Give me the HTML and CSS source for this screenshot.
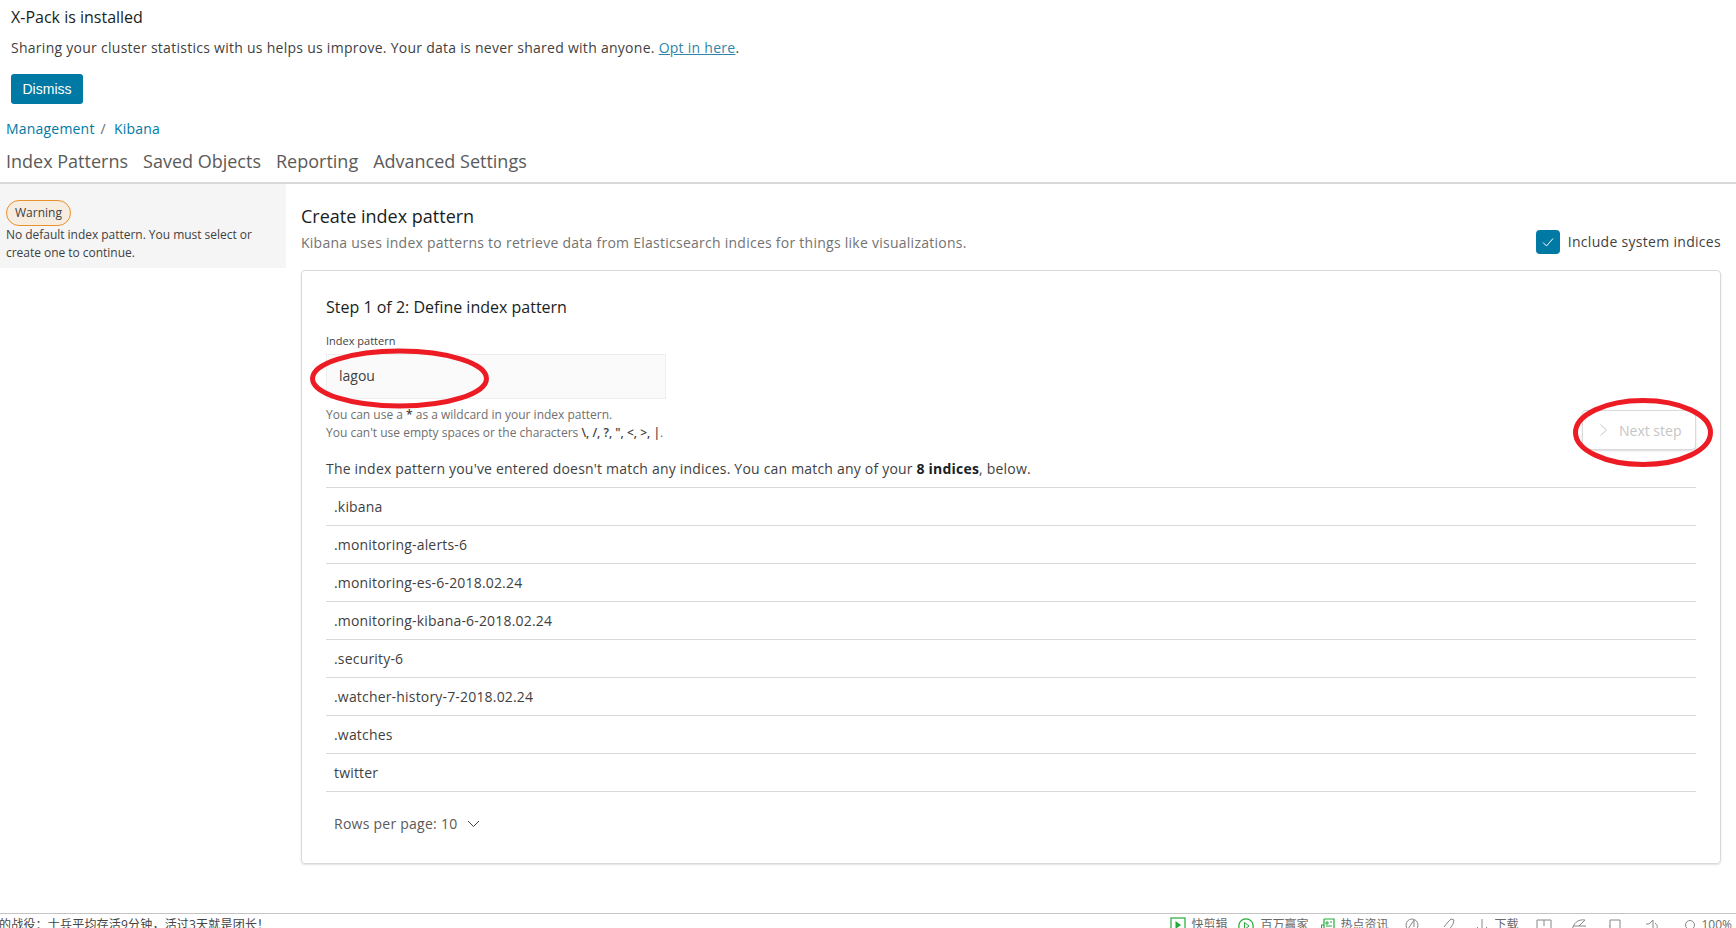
FILE: index.html
```html
<!DOCTYPE html>
<html lang="en">
<head>
<meta charset="utf-8">
<title>Kibana - Create index pattern</title>
<link rel="stylesheet" href="styles.css">
</head>
<body>
<div class="page">
  <main class="main">
    <section class="notice">
      <h2 class="notice-title">X-Pack is installed</h2>
      <p class="notice-text">Sharing your cluster statistics with us helps us improve. Your data is never shared with anyone. <a class="notice-link" href="#">Opt in here</a>.</p>
      <button class="dismiss">Dismiss</button>
    </section>
    <nav class="crumbs"><a href="#">Management</a><span class="crumb-sep">/</span><a href="#">Kibana</a></nav>
    <nav class="tabs"><span>Index Patterns</span><span>Saved Objects</span><span>Reporting</span><span>Advanced Settings</span></nav>
    <div class="content">
      <aside class="sidebar">
        <span class="badge">Warning</span>
        <p class="side-text">No default index pattern. You must select or create one to continue.</p>
      </aside>
      <div class="body">
        <header class="head">
          <div>
            <h1 class="head-title">Create index pattern</h1>
            <p class="head-sub">Kibana uses index patterns to retrieve data from Elasticsearch indices for things like visualizations.</p>
          </div>
          <div class="sys">
            <span class="check"><svg width="14" height="12" viewBox="0 0 14 12"><path d="M2 6.5 L5.5 10 L12 2.5" fill="none" stroke="#fff" stroke-width="1"/></svg></span>
            <span>Include system indices</span>
          </div>
        </header>
        <section class="panel">
          <h2 class="step">Step 1 of 2: Define index pattern</h2>
          <div class="form-row">
            <div>
              <label class="field-label">Index pattern</label>
              <div class="input">lagou</div>
              <p class="help">You can use a <b>*</b> as a wildcard in your index pattern.<br>You can't use empty spaces or the characters <b>\, /, ?, ", &lt;, &gt;, |</b>.</p>
            </div>
            <button class="next"><svg width="9" height="14" viewBox="0 0 9 14"><path d="M1.5 1.5 L7.5 7 L1.5 12.5" fill="none" stroke="#c6c6c6" stroke-width="1"/></svg><span>Next step</span></button>
          </div>
          <p class="match">The index pattern you've entered doesn't match any indices. You can match any of your <b>8 indices</b>, below.</p>
          <ul class="list">
            <li>.kibana</li>
            <li>.monitoring-alerts-6</li>
            <li>.monitoring-es-6-2018.02.24</li>
            <li>.monitoring-kibana-6-2018.02.24</li>
            <li>.security-6</li>
            <li>.watcher-history-7-2018.02.24</li>
            <li>.watches</li>
            <li>twitter</li>
          </ul>
          <div class="rows">Rows per page: 10<svg width="13" height="8" viewBox="0 0 13 8"><path d="M1 1 L6.5 6.5 L12 1" fill="none" stroke="#3f3f3f" stroke-width="1"/></svg></div>
        </section>
      </div>
    </div>
  </main>
  <footer class="status">
    <span class="news">的战役：士兵平均存活9分钟，活过3天就是团长！</span>
    <div class="tray">
      <span class="tray-item"><svg width="16" height="16" viewBox="0 0 16 16"><rect x="1" y="1" width="14" height="17" fill="none" stroke="#22ac38" stroke-width="1.2"/><path d="M5.5 4 L11 8 L5.5 12Z" fill="#22ac38"/></svg>快剪辑</span>
      <span class="tray-item"><svg width="16" height="16" viewBox="0 0 16 16"><circle cx="8" cy="9" r="7.2" fill="none" stroke="#22ac38" stroke-width="1.2"/><path d="M6.5 5.5 L11 9 L6.5 12.5Z" fill="none" stroke="#22ac38"/></svg>百万赢家</span>
      <span class="tray-item"><svg width="14" height="16" viewBox="0 0 14 16"><path d="M3 2 H13 V16 M3 2 V16 M3 8 H0.5 V16" fill="none" stroke="#22ac38" stroke-width="1.2"/><path d="M5 5h2v2H5zM9 5h2M5 9h6" fill="none" stroke="#22ac38"/></svg>热点资讯</span>
      <span class="tray-item"><svg width="14" height="16" viewBox="0 0 14 16"><circle cx="7" cy="8" r="6" fill="none" stroke="#888"/><path d="M3 12 L9 3 V10" fill="none" stroke="#888"/></svg></span>
      <span class="tray-item"><svg width="12" height="16" viewBox="0 0 12 16"><path d="M1 10 L5 5 L8 2 L11 3 L10 7 L6 13" fill="none" stroke="#888"/></svg></span>
      <span class="tray-item"><svg width="14" height="16" viewBox="0 0 14 16"><path d="M7 2 V15 M2 10 L7 15 L12 10" fill="none" stroke="#888"/></svg>下载</span>
      <span class="tray-item"><svg width="16" height="16" viewBox="0 0 16 16"><path d="M1 16 V3 H15 V16 M8 3 V9" fill="none" stroke="#888"/></svg></span>
      <span class="tray-item"><svg width="16" height="16" viewBox="0 0 16 16"><path d="M1 14 C2 6 7 2 14 3 M2 9 H15 M14 3 L8 9" fill="none" stroke="#888"/></svg></span>
      <span class="tray-item"><svg width="12" height="16" viewBox="0 0 12 16"><path d="M1 16 V3 H11 V16 M1 9 H0" fill="none" stroke="#888"/></svg></span>
      <span class="tray-item"><svg width="14" height="16" viewBox="0 0 14 16"><path d="M1 7 H4 L8 3 V16 M10 6 C13 8 13 11 10 13" fill="none" stroke="#888"/></svg></span>
      <span class="tray-item"><svg width="12" height="16" viewBox="0 0 12 16"><circle cx="6" cy="8" r="4.5" fill="none" stroke="#888"/></svg>100%</span>
    </div>
  </footer>
  <svg class="marks" width="1736" height="928" viewBox="0 0 1736 928">
    <ellipse cx="399.5" cy="378.5" rx="87" ry="27.5" fill="none" stroke="#ed1c24" stroke-width="5"/>
    <ellipse cx="1643" cy="432.5" rx="67.5" ry="32" fill="none" stroke="#ed1c24" stroke-width="5"/>
  </svg>
</div>
</body>
</html>
```

FILE: styles.css
```css
* { box-sizing: border-box; }
html, body { margin: 0; padding: 0; }
body { font-family: "Open Sans", "Noto Sans CJK SC", sans-serif; color: #3f3f3f; background: #fff; overflow: hidden; }
h1, h2, p, ul { margin: 0; padding: 0; font-weight: 400; }
a { color: #0079a5; text-decoration: none; }

.page { position: relative; width: 1736px; height: 928px; display: flex; flex-direction: column; overflow: hidden; }
.main { flex: 1; min-height: 0; }

.notice { padding: 5px 11px 0; height: 112px; }
.notice-title { font-size: 16px; line-height: 24px; color: #191e23; }
.notice-text { font-size: 14px; letter-spacing: .27px; line-height: 20px; margin-top: 9px; color: #3f3f3f; }
.notice-link { color: #3185a8; text-decoration: underline; }
.dismiss { display: block; margin-top: 16px; width: 72px; height: 30px; padding: 0; border: 0; border-radius: 3px; background: #0079a5; color: #fff; font: 14px "Liberation Sans", sans-serif; }

.crumbs { font-size: 14px; letter-spacing: .2px; line-height: 20px; padding-left: 6px; margin-top: 7px; height: 20px; display: flex; color: #6b6b6b; }
.crumb-sep { margin: 0 8px 0 6px; }

.tabs { display: flex; gap: 15px; height: 43px; padding: 10px 0 0 6px; font-size: 18px; line-height: 24px; color: #5a5a5a; }

.content { display: flex; border-top: 2px solid #d9d9d9; }
.sidebar { width: 286px; height: 84px; padding: 16px 6px 0; background: #f5f5f5; flex: none; }
.badge { display: block; width: 65px; height: 26px; border: 1px solid #e8912d; border-radius: 13px; background: #f7ece0; font-size: 12px; line-height: 23px; text-align: center; color: #3f3f3f; }
.side-text { font-size: 12px; letter-spacing: -.03px; line-height: 18px; margin-top: 0; width: 262px; color: #3f3f3f; }

.body { flex: 1; padding: 20px 15px 0 15px; min-width: 0; }
.head { display: flex; justify-content: space-between; align-items: flex-start; height: 66px; }
.head-title { font-size: 18px; line-height: 24px; color: #191e23; }
.head-sub { font-size: 14px; letter-spacing: .256px; line-height: 20px; margin-top: 5px; color: #737373; }
.sys { align-self: flex-end; display: flex; align-items: center; gap: 8px; font-size: 14px; letter-spacing: .3px; line-height: 24px; color: #3f3f3f; padding-bottom: 16px; }
.check { width: 24px; height: 24px; border-radius: 4px; background: #0079a5; display: flex; align-items: center; justify-content: center; }

.panel { height: 594px; border: 1px solid #d9d9d9; border-radius: 4px; box-shadow: 0 1px 2px rgba(0,0,0,.12); padding: 24px 24px 0; }
.step { font-size: 16px; line-height: 24px; color: #191e23; }
.form-row { display: flex; justify-content: space-between; align-items: flex-end; margin-top: 15px; }
.field-label { display: block; font-size: 11px; line-height: 14px; color: #3f3f3f; }
.input { width: 340px; height: 45px; margin-top: 6px; padding-left: 12px; background: #fafafa; border: 1px solid #eee; font-size: 14px; line-height: 41px; color: #3f3f3f; }
.help { font-size: 12px; line-height: 18px; margin-top: 7px; color: #6f6f6f; }
.help b { font-weight: 600; color: #3f3f3f; }
.next { width: 114px; height: 40px; display: flex; align-items: center; gap: 11px; padding: 0 0 0 16px; background: #fff; border: 1px solid #d9d9d9; border-radius: 4px; box-shadow: 0 1px 2px rgba(0,0,0,.15); font: 14px "Open Sans", sans-serif; color: #c6c6c6; margin-bottom: -8px; }

.match { font-size: 14px; letter-spacing: .2px; line-height: 20px; margin-top: 17px; color: #3f3f3f; }
.match b { font-weight: 700; color: #191e23; }
.list { list-style: none; margin-top: 8px; border-top: 1px solid #d9d9d9; }
.list li { height: 38px; border-bottom: 1px solid #d9d9d9; padding-left: 8px; font-size: 14px; letter-spacing: .18px; line-height: 38px; color: #3f3f3f; }
.rows { display: flex; align-items: center; gap: 10px; margin-top: 22px; padding-left: 8px; font-size: 14px; letter-spacing: .25px; line-height: 20px; color: #5a5a5a; }

.status { flex: none; height: 15px; border-top: 1px solid #c4c4c4; display: flex; justify-content: space-between; font-size: 12px; line-height: 22px; color: #444; overflow: hidden; background: #fff; white-space: nowrap; }
.news { display: block; margin-left: -1px; letter-spacing: .2px; }
.tray { display: flex; align-items: flex-start; padding-right: 4px; }
.tray-item { display: flex; align-items: flex-start; gap: 5px; color: #6a6a6a; }
.tray-item svg { display: block; margin-top: 3px; }
.tray-item:nth-child(1) { margin-right: 11px; }
.tray-item:nth-child(2) { margin-right: 13px; gap: 6px; }
.tray-item:nth-child(3) { margin-right: 17px; }
.tray-item:nth-child(4) { margin-right: 24px; }
.tray-item:nth-child(5) { margin-right: 20px; }
.tray-item:nth-child(6) { margin-right: 18px; }
.tray-item:nth-child(7) { margin-right: 19px; }
.tray-item:nth-child(8) { margin-right: 22px; }
.tray-item:nth-child(9) { margin-right: 24px; }
.tray-item:nth-child(10) { margin-right: 25px; }

.marks { position: absolute; top: 0; left: 0; pointer-events: none; }
```
